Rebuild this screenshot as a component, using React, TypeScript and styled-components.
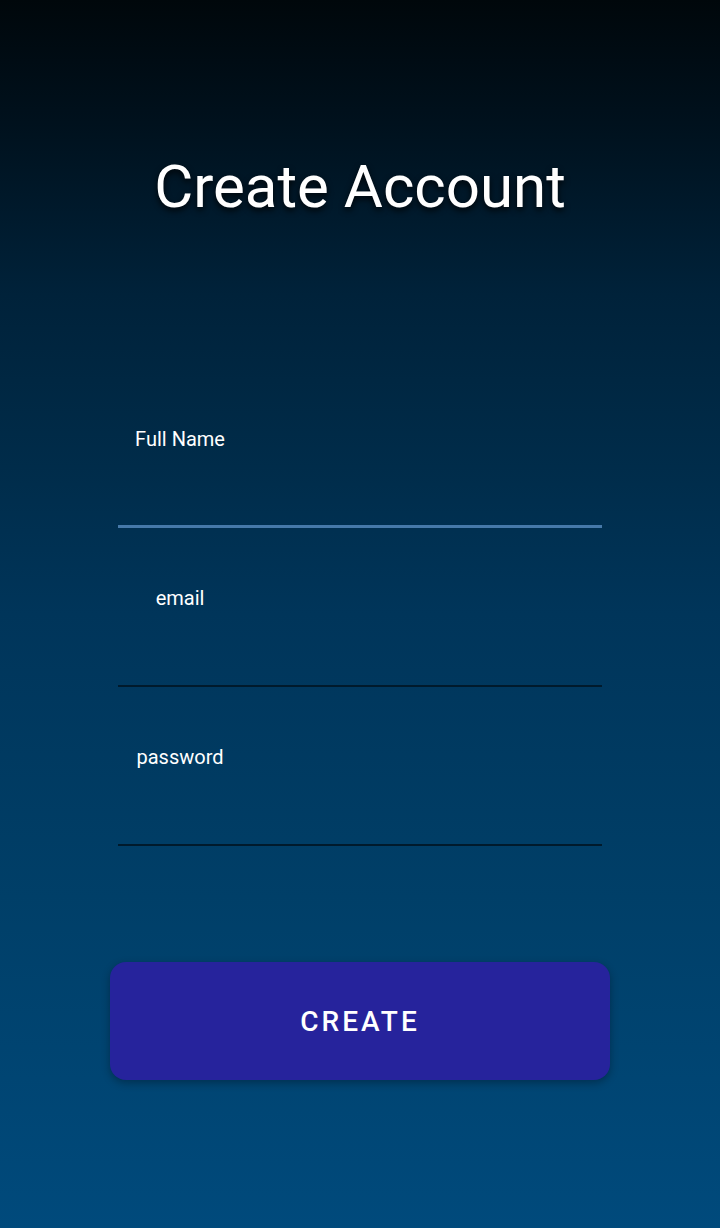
import styled, { createGlobalStyle } from 'styled-components';

const GlobalStyle = createGlobalStyle`
  html, body {
    margin: 0;
    padding: 0;
  }
  body {
    font-family: Roboto, 'Noto Sans', sans-serif;
  }
  * {
    box-sizing: border-box;
  }
`;

const fields = [
  { label: 'Full Name', active: true },
  { label: 'email', active: false },
  { label: 'password', active: false },
];

export default function App() {
  return (
    <>
      <GlobalStyle />
      <Screen>
        <Title>Create Account</Title>
        <Form>
          {fields.map((field) => (
            <Field key={field.label} $active={field.active}>
              <Label>{field.label}</Label>
            </Field>
          ))}
        </Form>
        <CreateButton type='button'>CREATE</CreateButton>
      </Screen>
    </>
  );
}

const Screen = styled.main`
  width: 720px;
  min-height: 1228px;
  background: linear-gradient(
    180deg,
    #00070b 0%,
    #00111d 10%,
    #00223a 24%,
    #002c4a 38%,
    #00355a 50%,
    #003f68 73%,
    #004a7c 100%
  );
  display: flex;
  flex-direction: column;
  align-items: center;
  padding-top: 151px;
`;

const Title = styled.h1`
  margin: 0;
  font-size: 60px;
  line-height: 72px;
  font-weight: 400;
  color: #ffffff;
  text-shadow: 0 3px 6px rgba(0, 0, 0, 0.85);
`;

const Form = styled.div`
  width: 484px;
  margin-top: 146px;
  display: flex;
  flex-direction: column;
`;

const Field = styled.div<{ $active: boolean }>`
  height: 159px;
  padding-top: 58px;
  border-bottom: ${({ $active }) => ($active ? '3px solid #4679a9' : '2px solid #001a2c')};
`;

const Label = styled.div`
  width: 124px;
  text-align: center;
  font-size: 20px;
  line-height: 24px;
  color: #ffffff;
`;

const CreateButton = styled.button`
  margin-top: 116px;
  width: 500px;
  height: 118px;
  border: none;
  border-radius: 16px;
  background: #26239c;
  box-shadow: 0 3px 8px rgba(0, 0, 0, 0.3);
  color: #ffffff;
  font-family: Roboto, sans-serif;
  font-size: 28px;
  font-weight: 500;
  letter-spacing: 3px;
  cursor: pointer;
`;
